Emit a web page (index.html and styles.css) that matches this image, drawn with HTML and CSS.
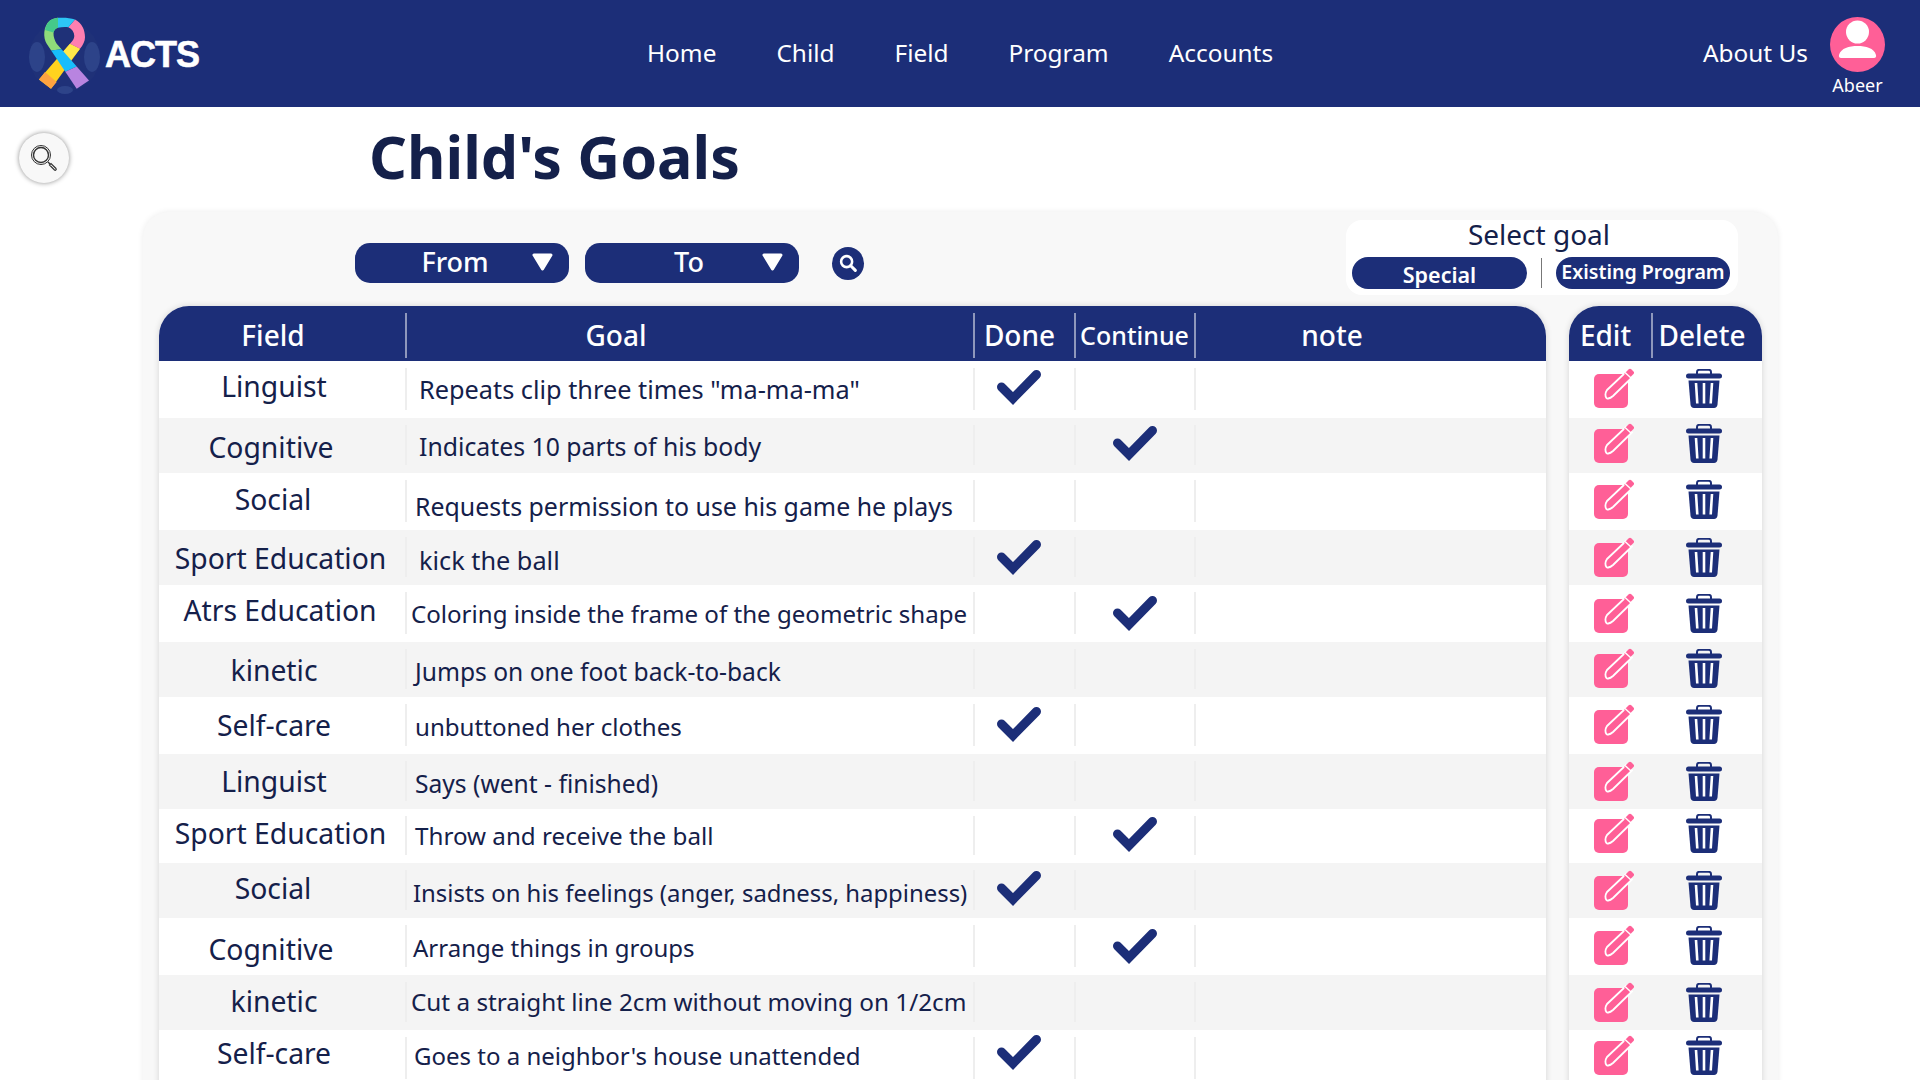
FILE: index.html
```html
<!DOCTYPE html>
<html lang="en">
<head>
  <meta charset="UTF-8" />
  <title>Child's Goals</title>
  <link rel="stylesheet" href="styles.css">
</head>
<body>

<svg class="icon-defs" width="0" height="0">
  <symbol id="icon-check" viewBox="0 0 46 36">
    <path d="M5.5 18 L17 29.5 L40.5 5.5" fill="none" stroke="#1c2e78" stroke-width="9" stroke-linecap="round" stroke-linejoin="miter"/>
  </symbol>
  <symbol id="icon-edit" viewBox="0 0 40 40">
    <rect x="0" y="6" width="34" height="34" rx="5" fill="#ff5f97"/>
    <path d="M13 22 L32 4 L38 9.5 L19 28 C15 31.5 12.5 30.5 12.5 30 C11 28.500 11 25 13 22 Z" fill="#ff5f97" stroke="#fff" stroke-width="1.800"/>
    <path d="M30 6 L34.500 1.500 C35.500 .5 36.500 .5 37.500 1.500 L39.500 3.500 C40.300 4.500 40.300 5 39.500 6 L35.500 10 Z" fill="#ff5f97"/>
    <path d="M31 4.500 L37 10" stroke="#fff" stroke-width="1.500"/>
  </symbol>
  <symbol id="icon-trash" viewBox="0 0 36 39">
    <path d="M11 5 V3 C11 1.500 12 .8 13.500 .8 H22.500 C24 .8 25 1.500 25 3 V5" fill="none" stroke="#1c2e78" stroke-width="2"/>
    <rect x="0" y="4.500" width="36" height="5" rx="2.500" fill="#1c2e78"/>
    <path d="M2.500 11.500 H33.500 L31.500 35.500 C31.300 37.800 30 39 28 39 H8 C6 39 4.700 37.800 4.500 35.500 Z" fill="#1c2e78"/>
    <path d="M10 14 L11.300 34.500 M18 14 V34.500 M26 14 L24.700 34.500" stroke="#fff" stroke-width="2.600" fill="none"/>
  </symbol>
  <symbol id="icon-find" viewBox="0 0 24 24">
    <circle cx="10.500" cy="10.500" r="6" fill="none" stroke="#fff" stroke-width="2.800"/>
    <path d="M15 15 L20 20" stroke="#fff" stroke-width="3.400" stroke-linecap="round"/>
  </symbol>
  <symbol id="icon-arrow" viewBox="0 0 21 18">
    <path d="M2 2 H19 L10.500 16 Z" fill="#fff" stroke="#fff" stroke-width="3" stroke-linejoin="round"/>
  </symbol>
</svg>

<header class="topbar">
  <div class="brand">
    <svg class="brand-logo" width="80" height="84" viewBox="0 0 80 84">
      <circle cx="39.500" cy="44.500" r="35.500" fill="#1f3178"/>
      <ellipse cx="12" cy="45" rx="8" ry="15" fill="#2d4389"/>
      <ellipse cx="67" cy="45" rx="8" ry="15" fill="#2d4389"/>
      <ellipse cx="40" cy="78" rx="8" ry="4" fill="#2d4389"/>
      <path d="M14 67.500 L45 31.800 L55 36.800 L26 76.800 Z" fill="#ffd21e"/>
      <path d="M14 67.500 L20 60 L31.700 70 L26 76.800 Z" fill="#ffa340"/>
      <path d="M36 42 L45 31.800 L55 36.800 L46 48 Z" fill="#ffe94a"/>
      <path d="M50 7.500 C57 11 60 18 60 25.200 C60 29 58 33 55 36.800 L45 31.800 C47.500 29 49.300 27 49.300 24 C49.300 20 47 17 43.300 15.200 Z" fill="#ff7fb0"/>
      <path d="M33 5.800 C38 5.500 45 5.500 50 7.500 L43.300 15.200 C40 15 36 15 33 15.800 Z" fill="#2dc6f5"/>
      <path d="M21.700 31.800 C18 26 18 14 25 8.500 C28 6.500 31 6 33 5.800 L33 15.800 C30 16.500 28.800 18.500 28.500 21 C28.300 25 30 29 31.700 31.800 L36.500 37.300 L26.200 38.500 Z" fill="#8fdc7a"/>
      <path d="M20 18 C21 13 23 10 25 8.500 C28 6.500 31 6 33 5.800 L33 15.800 C30 16.500 29 19 28.500 20.500 Z" fill="#45c98a"/>
      <path d="M26.200 38.500 L36.500 37.300 L51.700 54.500 L40.300 59.700 Z" fill="#17bdfb"/>
      <path d="M40.300 59.700 L51.700 54.500 L64 68.500 L51.700 76.800 Z" fill="#b884e0"/>
    </svg>
    <span class="brand-name">ACTS</span>
  </div>

  <nav class="main-nav">
    <a href="#">Home</a>
    <a href="#">Child</a>
    <a href="#">Field</a>
    <a href="#">Program</a>
    <a href="#">Accounts</a>
  </nav>

  <div class="user-area">
    <a href="#" class="about-link">About Us</a>
    <div class="user-box">
      <svg width="55" height="55" viewBox="0 0 55 55">
        <circle cx="27.500" cy="27.500" r="27.500" fill="#ff5f97"/>
        <circle cx="27.500" cy="15" r="11.500" fill="#fff"/>
        <path d="M9 38 C11 31 19 29 27.500 29 C36 29 44 31 46 38 C46.500 40 45.500 41 44 41 H11 C9.500 41 8.500 40 9 38 Z" fill="#fff"/>
      </svg>
      <span class="user-name">Abeer</span>
    </div>
  </div>
</header>

<main>
  <div class="title-row">
    <button class="side-search">
      <svg width="30" height="30" viewBox="0 0 30 30">
        <circle cx="12" cy="12" r="9.500" fill="none" stroke="#333" stroke-width="1"/>
        <circle cx="12" cy="12" r="7.500" fill="none" stroke="#333" stroke-width="1.400"/>
        <path d="M19 19 L21 21" stroke="#333" stroke-width="1.500"/>
        <path d="M20.500 22 L22 20.500 L27 25.500 C27.800 26.500 26.500 27.800 25.500 27 Z" fill="#fff" stroke="#333" stroke-width="1.200"/>
      </svg>
    </button>
    <h1>Child's Goals</h1>
  </div>

  <section class="goals-card">
    <div class="toolbar">
      <div class="date-filters">
        <button class="date-select">From<svg class="arrow"><use href="#icon-arrow"/></svg></button>
        <button class="date-select date-to">To<svg class="arrow"><use href="#icon-arrow"/></svg></button>
        <button class="date-search"><svg width="22" height="22"><use href="#icon-find"/></svg></button>
      </div>
      <div class="select-goal">
        <div class="select-title">Select goal</div>
        <div class="select-options">
          <button class="goal-pill pill-special">Special</button>
          <span class="pill-divider"></span>
          <button class="goal-pill pill-existing">Existing Program</button>
        </div>
      </div>
    </div>

    <div class="tables">
      <div class="goals-table">
        <div class="table-head">
          <div class="head-field">Field</div>
          <div class="head-goal">Goal</div>
          <div class="head-done">Done</div>
          <div class="head-continue">Continue</div>
          <div class="head-note">note</div>
        </div>

        <div class="goal-row row-1"><div class="cell-field">Linguist</div><div class="cell-goal">Repeats clip three times "ma-ma-ma"</div><div class="cell-mark"><svg class="check"><use href="#icon-check"/></svg></div><div class="cell-mark"></div><div class="cell-note"></div></div>
        <div class="goal-row row-2"><div class="cell-field">Cognitive</div><div class="cell-goal">Indicates 10 parts of his body</div><div class="cell-mark"></div><div class="cell-mark"><svg class="check"><use href="#icon-check"/></svg></div><div class="cell-note"></div></div>
        <div class="goal-row row-3"><div class="cell-field">Social</div><div class="cell-goal">Requests permission to use his game he plays</div><div class="cell-mark"></div><div class="cell-mark"></div><div class="cell-note"></div></div>
        <div class="goal-row row-4"><div class="cell-field">Sport Education</div><div class="cell-goal">kick the ball</div><div class="cell-mark"><svg class="check"><use href="#icon-check"/></svg></div><div class="cell-mark"></div><div class="cell-note"></div></div>
        <div class="goal-row row-5"><div class="cell-field">Atrs Education</div><div class="cell-goal">Coloring inside the frame of the geometric shape</div><div class="cell-mark"></div><div class="cell-mark"><svg class="check"><use href="#icon-check"/></svg></div><div class="cell-note"></div></div>
        <div class="goal-row row-6"><div class="cell-field">kinetic</div><div class="cell-goal">Jumps on one foot back-to-back</div><div class="cell-mark"></div><div class="cell-mark"></div><div class="cell-note"></div></div>
        <div class="goal-row row-7"><div class="cell-field">Self-care</div><div class="cell-goal">unbuttoned her clothes</div><div class="cell-mark"><svg class="check"><use href="#icon-check"/></svg></div><div class="cell-mark"></div><div class="cell-note"></div></div>
        <div class="goal-row row-8"><div class="cell-field">Linguist</div><div class="cell-goal">Says (went - finished)</div><div class="cell-mark"></div><div class="cell-mark"></div><div class="cell-note"></div></div>
        <div class="goal-row row-9"><div class="cell-field">Sport Education</div><div class="cell-goal">Throw and receive the ball</div><div class="cell-mark"></div><div class="cell-mark"><svg class="check"><use href="#icon-check"/></svg></div><div class="cell-note"></div></div>
        <div class="goal-row row-10"><div class="cell-field">Social</div><div class="cell-goal">Insists on his feelings (anger, sadness, happiness)</div><div class="cell-mark"><svg class="check"><use href="#icon-check"/></svg></div><div class="cell-mark"></div><div class="cell-note"></div></div>
        <div class="goal-row row-11"><div class="cell-field">Cognitive</div><div class="cell-goal">Arrange things in groups</div><div class="cell-mark"></div><div class="cell-mark"><svg class="check"><use href="#icon-check"/></svg></div><div class="cell-note"></div></div>
        <div class="goal-row row-12"><div class="cell-field">kinetic</div><div class="cell-goal">Cut a straight line 2cm without moving on 1/2cm</div><div class="cell-mark"></div><div class="cell-mark"></div><div class="cell-note"></div></div>
        <div class="goal-row row-13"><div class="cell-field">Self-care</div><div class="cell-goal">Goes to a neighbor's house unattended</div><div class="cell-mark"><svg class="check"><use href="#icon-check"/></svg></div><div class="cell-mark"></div><div class="cell-note"></div></div>
      </div>

      <div class="actions-table">
        <div class="actions-head">
          <div class="head-edit">Edit</div>
          <div class="head-delete">Delete</div>
        </div>
        <div class="action-row row-1"><svg class="edit"><use href="#icon-edit"/></svg><svg class="trash"><use href="#icon-trash"/></svg></div>
        <div class="action-row row-2"><svg class="edit"><use href="#icon-edit"/></svg><svg class="trash"><use href="#icon-trash"/></svg></div>
        <div class="action-row row-3"><svg class="edit"><use href="#icon-edit"/></svg><svg class="trash"><use href="#icon-trash"/></svg></div>
        <div class="action-row row-4"><svg class="edit"><use href="#icon-edit"/></svg><svg class="trash"><use href="#icon-trash"/></svg></div>
        <div class="action-row row-5"><svg class="edit"><use href="#icon-edit"/></svg><svg class="trash"><use href="#icon-trash"/></svg></div>
        <div class="action-row row-6"><svg class="edit"><use href="#icon-edit"/></svg><svg class="trash"><use href="#icon-trash"/></svg></div>
        <div class="action-row row-7"><svg class="edit"><use href="#icon-edit"/></svg><svg class="trash"><use href="#icon-trash"/></svg></div>
        <div class="action-row row-8"><svg class="edit"><use href="#icon-edit"/></svg><svg class="trash"><use href="#icon-trash"/></svg></div>
        <div class="action-row row-9"><svg class="edit"><use href="#icon-edit"/></svg><svg class="trash"><use href="#icon-trash"/></svg></div>
        <div class="action-row row-10"><svg class="edit"><use href="#icon-edit"/></svg><svg class="trash"><use href="#icon-trash"/></svg></div>
        <div class="action-row row-11"><svg class="edit"><use href="#icon-edit"/></svg><svg class="trash"><use href="#icon-trash"/></svg></div>
        <div class="action-row row-12"><svg class="edit"><use href="#icon-edit"/></svg><svg class="trash"><use href="#icon-trash"/></svg></div>
        <div class="action-row row-13"><svg class="edit"><use href="#icon-edit"/></svg><svg class="trash"><use href="#icon-trash"/></svg></div>
      </div>
    </div>
  </section>
</main>

</body>
</html>
```

FILE: styles.css
```css
* {
  box-sizing: border-box;
}

body {
  font-family: "Noto Sans", "Open Sans", sans-serif;
  background-color: #fff;
  color: #14204a;
  margin: 0;
  height: 100vh;
  overflow: hidden;
}

button {
  font-family: inherit;
  border: none;
  padding: 0;
  cursor: pointer;
}

.icon-defs {
  display: block;
  height: 0;
}

/* Top navigation */
.topbar {
  height: 107px;
  background-color: #1c2e78;
  color: #fff;
  display: flex;
  align-items: center;
  padding: 0 35px 0 25px;
}

.brand {
  display: flex;
  align-items: center;
  width: 622px;
}

.brand-name {
  font-family: "Liberation Sans", sans-serif;
  font-size: 36px;
  font-weight: bold;
  letter-spacing: -1px;
  -webkit-text-stroke: 0.6px #fff;
  margin-top: 3px;
}

.main-nav {
  display: flex;
  gap: 60px;
  margin-top: -3px;
}

.main-nav a,
.about-link {
  color: #fff;
  text-decoration: none;
  font-size: 24.4px;
}

.user-area {
  display: flex;
  align-items: center;
  margin-left: auto;
}

.about-link {
  margin-right: 22px;
  margin-top: -3px;
}

.user-box {
  display: flex;
  flex-direction: column;
  align-items: center;
  padding-top: 17px;
  height: 107px;
}

.user-box svg {
  display: block;
}

.user-name {
  font-size: 18px;
  line-height: 26px;
}

/* Page title */
.title-row {
  height: 105px;
  display: flex;
  align-items: flex-start;
  padding: 26px 0 0 19px;
}

.side-search {
  width: 50px;
  height: 50px;
  border-radius: 50%;
  background-color: #f8f8f8;
  box-shadow: 0 0 5px rgba(0, 0, 0, 0.45);
  display: flex;
  align-items: center;
  justify-content: center;
}

h1 {
  margin: -12px 0 0 300px;
  font-size: 59.2px;
  line-height: 70px;
  font-weight: bold;
  color: #14204a;
}

/* Card */
.goals-card {
  width: 1635px;
  height: 1000px;
  margin-left: 143px;
  background-color: #f8f8f8;
  border-radius: 26px;
  box-shadow: 0 0 6px rgba(0, 0, 0, 0.08);
  padding: 0 16px;
}

.toolbar {
  height: 94px;
  display: flex;
  align-items: flex-start;
}

.date-filters {
  display: flex;
  align-items: center;
  gap: 16px;
  margin: 31px 0 0 196px;
}

.date-select {
  width: 214px;
  height: 40px;
  border-radius: 15px;
  background-color: #1c2e78;
  color: #fff;
  font-size: 27px;
  font-weight: 500;
  line-height: 36px;
  position: relative;
  padding: 0 14px 3px 0;
}

.date-to {
  padding-right: 6px;
}

.arrow {
  position: absolute;
  right: 16px;
  top: 10px;
  width: 21px;
  height: 18px;
}

.date-search {
  width: 32px;
  height: 33px;
  margin-left: 17px;
  border-radius: 50%;
  background-color: #1c2e78;
  display: flex;
  align-items: center;
  justify-content: center;
}

.select-goal {
  width: 392px;
  height: 75px;
  margin: 8px 24px 0 auto;
  background-color: #fff;
  border-radius: 16px;
  padding: 0 8px 0 6px;
}

.select-title {
  height: 37px;
  line-height: 28px;
  text-align: center;
  font-size: 28px;
  padding-right: 4px;
}

.select-options {
  display: flex;
  align-items: center;
}

.goal-pill {
  height: 32px;
  border-radius: 16px;
  background-color: #1c2e78;
  color: #fff;
  font-weight: 600;
}

.pill-special {
  width: 175px;
  font-size: 21.500px;
  line-height: 28px;
  padding-top: 3px;
}

.pill-divider {
  width: 1px;
  height: 30px;
  background-color: #777;
  margin: 0 14px;
}

.pill-existing {
  width: 174px;
  font-size: 19.600px;
  padding-bottom: 3px;
  white-space: nowrap;
}

/* Tables */
.tables {
  display: flex;
  gap: 23px;
  align-items: flex-start;
}

.goals-table,
.actions-table {
  background-color: #fff;
  border-radius: 30px 30px 0 0;
  box-shadow: 0 0 6px rgba(0, 0, 0, 0.15);
  overflow: hidden;
}

.goals-table {
  width: 1387px;
}

.actions-table {
  width: 193px;
}

.table-head,
.goal-row {
  display: grid;
  grid-template-columns: 246px 568px 101px 120px 352px;
}

.table-head,
.actions-head {
  height: 55px;
  background-color: #1c2e78;
  color: #fff;
  font-size: 28px;
  font-weight: 500;
  line-height: 59px;
  text-align: center;
}

.table-head > div,
.actions-head > div {
  position: relative;
}

.table-head > div + div::before,
.actions-head > div + div::before {
  content: "";
  position: absolute;
  left: 0;
  top: 7px;
  bottom: 7px;
  width: 2px;
  background-color: rgba(255, 255, 255, 0.5);
}

.head-field {
  padding-right: 18px;
}

.head-goal {
  padding-right: 146px;
}

.head-done {
  padding-right: 8px;
}

.head-continue {
  font-size: 25px;
  padding-left: 1px;
}

.head-note {
  padding-right: 76px;
}

.actions-head {
  display: grid;
  grid-template-columns: 82px 111px;
}

.head-edit {
  padding-right: 9px;
}

.head-delete {
  padding-right: 9px;
}

.goal-row,
.action-row {
  height: 57px;
}

.goal-row:nth-child(odd),
.action-row:nth-child(odd) {
  height: 55px;
  background-color: #f4f4f4;
}

.goal-row > div {
  position: relative;
}

.goal-row > div + div::before {
  content: "";
  position: absolute;
  left: 0;
  top: 7px;
  bottom: 8px;
  width: 2px;
  background-color: #eee;
}

.cell-field {
  font-size: 28.300px;
  line-height: 32px;
  text-align: center;
  white-space: nowrap;
  padding-top: var(--field-y);
  padding-right: var(--field-r);
}

.cell-goal {
  font-size: var(--goal-size);
  line-height: 32px;
  white-space: nowrap;
  padding-top: var(--goal-y);
  padding-left: var(--goal-x);
}

.cell-mark {
  display: flex;
  justify-content: center;
  padding-top: var(--check-y);
}

.goal-row .cell-mark:nth-child(3) {
  padding-right: 9px;
}

.goal-row .cell-mark:nth-child(4) {
  padding-left: 2px;
}

.check {
  width: 46px;
  height: 36px;
}

.action-row {
  display: flex;
  padding-top: var(--icon-y);
  padding-left: 25px;
}

.edit {
  width: 40px;
  height: 40px;
}

.trash {
  width: 36px;
  height: 39px;
  margin: 1px 0 0 52px;
}

/* the rows of the source are not evenly placed */
.row-1 { --field-y: 9px; --field-r: 16px; --goal-size: 25.300px; --goal-y: 12px; --goal-x: 14px; --check-y: 8px; --icon-y: 7px; }
.row-2 { --field-y: 13px; --field-r: 22px; --goal-size: 24.800px; --goal-y: 12px; --goal-x: 14px; --check-y: 7px; --icon-y: 5px; }
.row-3 { --field-y: 10px; --field-r: 18px; --goal-size: 24.900px; --goal-y: 17px; --goal-x: 10px; --check-y: 8px; --icon-y: 6px; }
.row-4 { --field-y: 12px; --field-r: 3px; --goal-size: 25.300px; --goal-y: 14px; --goal-x: 14px; --check-y: 9px; --icon-y: 7px; }
.row-5 { --field-y: 9px; --field-r: 4px; --goal-size: 24.100px; --goal-y: 13px; --goal-x: 6px; --check-y: 10px; --icon-y: 8px; }
.row-6 { --field-y: 12px; --field-r: 16px; --goal-size: 24.600px; --goal-y: 14px; --goal-x: 10px; --check-y: 8px; --icon-y: 6px; }
.row-7 { --field-y: 12px; --field-r: 16px; --goal-size: 24.100px; --goal-y: 14px; --goal-x: 10px; --check-y: 9px; --icon-y: 7px; }
.row-8 { --field-y: 11px; --field-r: 16px; --goal-size: 24.600px; --goal-y: 14px; --goal-x: 10px; --check-y: 8px; --icon-y: 7px; }
.row-9 { height: 54px; --field-y: 8px; --field-r: 3px; --goal-size: 24.200px; --goal-y: 11px; --goal-x: 10px; --check-y: 7px; --icon-y: 4px; }
.row-10 { --field-y: 9px; --field-r: 18px; --goal-size: 23.900px; --goal-y: 14px; --goal-x: 8px; --check-y: 7px; --icon-y: 7px; }
.row-11 { --field-y: 15px; --field-r: 22px; --goal-size: 24px; --goal-y: 14px; --goal-x: 8px; --check-y: 10px; --icon-y: 7px; }
.row-12 { --field-y: 10px; --field-r: 16px; --goal-size: 24.300px; --goal-y: 11px; --goal-x: 6px; --check-y: 8px; --icon-y: 7px; }
.row-13 { --field-y: 7px; --field-r: 16px; --goal-size: 24px; --goal-y: 10px; --goal-x: 9px; --check-y: 4px; --icon-y: 5px; }
```
